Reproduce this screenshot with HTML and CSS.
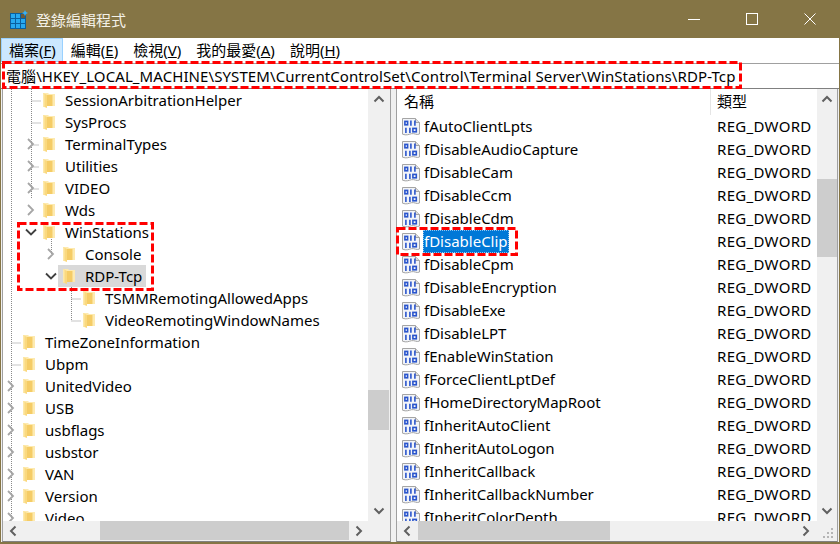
FILE: index.html
```html
<!DOCTYPE html>
<html lang="zh-Hant">
<head>
<meta charset="utf-8">
<title>登錄編輯程式</title>
<link rel="stylesheet" href="styles.css">
</head>
<body>
<svg class="defs" width="0" height="0" aria-hidden="true">
  <defs>
    <symbol id="folder" viewBox="0 0 13 17">
      <path d="M0 1h5l1 1h6v12H0z" fill="#fdeab0"/>
      <path d="M4 3h5v11H4z" fill="#f5cc66"/>
      <path d="M9 3h1v11H9z" fill="#f9dc8c"/>
      <path d="M0 1l4 2v13L0 14.500z" fill="#fad97f"/>
      <path d="M0 1l1.500 .8V15L0 14.500z" fill="#fde9ab"/>
    </symbol>
    <symbol id="bin" viewBox="0 0 18 18">
      <path d="M.5.5h13l4 4v11.500c-3 1.500-5-1-8-.3s-5 2-9 .5z" fill="#f2f4f8" stroke="#a5a5a5"/>
      <path d="M13.500.5v4h4" fill="#dcdcdc" stroke="#a5a5a5"/>
      <g fill="none" stroke="#2a55cc" stroke-width="1.600">
        <rect x="2.900" y="3.400" width="2.700" height="3.400"/>
        <path d="M8.900 2.500v5.200M12.900 2.500v5.200"/>
        <path d="M3.900 9.800v5.200M7.900 9.800v5.200"/>
        <rect x="10.900" y="10.400" width="3.400" height="3.400"/>
      </g>
    </symbol>
    <symbol id="right" viewBox="0 0 12 12"><path d="M3 1l5 5-5 5" fill="none" stroke="#a6a6a6" stroke-width="1.800"/></symbol>
    <symbol id="down" viewBox="0 0 12 12"><path d="M1 3.500l5 5 5-5" fill="none" stroke="#404040" stroke-width="1.800"/></symbol>
    <symbol id="s-up" viewBox="0 0 12 12"><path d="M1.500 8.500L6 4l4.500 4.500" fill="none" stroke="#606060" stroke-width="2"/></symbol>
    <symbol id="s-down" viewBox="0 0 12 12"><path d="M1.500 3.500L6 8l4.500-4.500" fill="none" stroke="#606060" stroke-width="2"/></symbol>
    <symbol id="s-left" viewBox="0 0 12 12"><path d="M8.500 1.500L4 6l4.500 4.500" fill="none" stroke="#606060" stroke-width="2"/></symbol>
    <symbol id="s-right" viewBox="0 0 12 12"><path d="M3.500 1.500L8 6l-4.500 4.500" fill="none" stroke="#606060" stroke-width="2"/></symbol>
  </defs>
</svg>
<div class="window">
  <header class="titlebar">
    <svg class="app-icon" width="19" height="19" viewBox="0 0 19 19">
      <rect x="0" y="3" width="16" height="16" fill="#0a5f9e"/>
      <g fill="#27a9f0">
        <rect x="1" y="4" width="4" height="4"/><rect x="6" y="4" width="4" height="4"/>
        <rect x="1" y="9" width="4" height="4"/><rect x="6" y="9" width="4" height="4"/><rect x="11" y="9" width="4" height="4"/>
        <rect x="1" y="14" width="4" height="4"/><rect x="6" y="14" width="4" height="4"/><rect x="11" y="14" width="4" height="4"/>
      </g>
      <rect x="11" y="4" width="4" height="4" fill="#6b5a3c"/>
      <path d="M15 0l1 2 2 1-2 1-1 2-1-2-2-1 2-1z" fill="#38b0f5"/>
    </svg>
    <span class="title">登錄編輯程式</span>
    <div class="controls">
      <span class="ctl"><svg width="12" height="12" viewBox="0 0 12 12"><path d="M0 6.500h12" stroke="#fff"/></svg></span>
      <span class="ctl"><svg width="12" height="12" viewBox="0 0 12 12"><rect x=".5" y=".5" width="11" height="11" fill="none" stroke="#fff"/></svg></span>
      <span class="ctl"><svg width="12" height="12" viewBox="0 0 12 12"><path d="M.5.500l11 11M11.500.500l-11 11" stroke="#fff"/></svg></span>
    </div>
  </header>
  <nav class="menubar">
    <span class="menu active">檔案(<u>F</u>)</span>
    <span class="menu">編輯(<u>E</u>)</span>
    <span class="menu">檢視(<u>V</u>)</span>
    <span class="menu">我的最愛(<u>A</u>)</span>
    <span class="menu">說明(<u>H</u>)</span>
  </nav>
  <div class="address">電腦\HKEY_LOCAL_MACHINE\SYSTEM\CurrentControlSet\Control\Terminal Server\WinStations\RDP-Tcp</div>
  <main class="panes">
    <section class="pane pane-left">
      <div class="view tree">
        <svg class="lines" width="365" height="432" viewBox="0 0 365 432">
          <g stroke="#8a8a8a" stroke-dasharray="1 1" fill="none">
            <path d="M8.500 0V432M28.500 0V110M28.500 12h9M28.500 34h9M28.500 56h8M28.500 78h8M28.500 100h8M48.500 144V166M68.500 198V232M68.500 210h9M68.500 232h9M8.500 254h9M8.500 276h9"/>
          </g>
        </svg>
        <div class="tr lv1"><span class="tw"></span><span class="node"><svg class="fd"><use href="#folder"/></svg>SessionArbitrationHelper</span></div>
        <div class="tr lv1"><span class="tw"></span><span class="node"><svg class="fd"><use href="#folder"/></svg>SysProcs</span></div>
        <div class="tr lv1"><span class="tw"><svg class="chev"><use href="#right"/></svg></span><span class="node"><svg class="fd"><use href="#folder"/></svg>TerminalTypes</span></div>
        <div class="tr lv1"><span class="tw"><svg class="chev"><use href="#right"/></svg></span><span class="node"><svg class="fd"><use href="#folder"/></svg>Utilities</span></div>
        <div class="tr lv1"><span class="tw"><svg class="chev"><use href="#right"/></svg></span><span class="node"><svg class="fd"><use href="#folder"/></svg>VIDEO</span></div>
        <div class="tr lv1"><span class="tw"><svg class="chev"><use href="#right"/></svg></span><span class="node"><svg class="fd"><use href="#folder"/></svg>Wds</span></div>
        <div class="tr lv1"><span class="tw"><svg class="chev"><use href="#down"/></svg></span><span class="node"><svg class="fd"><use href="#folder"/></svg>WinStations</span></div>
        <div class="tr lv2"><span class="tw"><svg class="chev"><use href="#right"/></svg></span><span class="node"><svg class="fd"><use href="#folder"/></svg>Console</span></div>
        <div class="tr lv2"><span class="tw"><svg class="chev"><use href="#down"/></svg></span><span class="node sel"><svg class="fd"><use href="#folder"/></svg>RDP-Tcp</span></div>
        <div class="tr lv3"><span class="tw"></span><span class="node"><svg class="fd"><use href="#folder"/></svg>TSMMRemotingAllowedApps</span></div>
        <div class="tr lv3"><span class="tw"></span><span class="node"><svg class="fd"><use href="#folder"/></svg>VideoRemotingWindowNames</span></div>
        <div class="tr"><span class="tw"></span><span class="node"><svg class="fd"><use href="#folder"/></svg>TimeZoneInformation</span></div>
        <div class="tr"><span class="tw"></span><span class="node"><svg class="fd"><use href="#folder"/></svg>Ubpm</span></div>
        <div class="tr"><span class="tw"><svg class="chev"><use href="#right"/></svg></span><span class="node"><svg class="fd"><use href="#folder"/></svg>UnitedVideo</span></div>
        <div class="tr"><span class="tw"><svg class="chev"><use href="#right"/></svg></span><span class="node"><svg class="fd"><use href="#folder"/></svg>USB</span></div>
        <div class="tr"><span class="tw"><svg class="chev"><use href="#right"/></svg></span><span class="node"><svg class="fd"><use href="#folder"/></svg>usbflags</span></div>
        <div class="tr"><span class="tw"><svg class="chev"><use href="#right"/></svg></span><span class="node"><svg class="fd"><use href="#folder"/></svg>usbstor</span></div>
        <div class="tr"><span class="tw"><svg class="chev"><use href="#right"/></svg></span><span class="node"><svg class="fd"><use href="#folder"/></svg>VAN</span></div>
        <div class="tr"><span class="tw"><svg class="chev"><use href="#right"/></svg></span><span class="node"><svg class="fd"><use href="#folder"/></svg>Version</span></div>
        <div class="tr"><span class="tw"><svg class="chev"><use href="#right"/></svg></span><span class="node"><svg class="fd"><use href="#folder"/></svg>Video</span></div>
      </div>
      <div class="vbar">
        <span class="sb-btn"><svg class="arr"><use href="#s-up"/></svg></span>
        <span class="thumb-v thumb-v-left"></span>
        <span class="sb-btn sb-end"><svg class="arr"><use href="#s-down"/></svg></span>
      </div>
      <div class="hbar">
        <span class="sb-btn h"><svg class="arr"><use href="#s-left"/></svg></span>
        <span class="thumb-h thumb-h-left"></span>
        <span class="sb-btn h"><svg class="arr"><use href="#s-right"/></svg></span>
      </div>
    </section>
    <section class="pane pane-right">
      <div class="view list">
        <div class="lhead"><span class="col-name">名稱</span><span class="col-type">類型</span></div>
        <div class="lr"><svg class="bi"><use href="#bin"/></svg><span class="nm">fAutoClientLpts</span><span class="ty">REG_DWORD</span></div>
        <div class="lr"><svg class="bi"><use href="#bin"/></svg><span class="nm">fDisableAudioCapture</span><span class="ty">REG_DWORD</span></div>
        <div class="lr"><svg class="bi"><use href="#bin"/></svg><span class="nm">fDisableCam</span><span class="ty">REG_DWORD</span></div>
        <div class="lr"><svg class="bi"><use href="#bin"/></svg><span class="nm">fDisableCcm</span><span class="ty">REG_DWORD</span></div>
        <div class="lr"><svg class="bi"><use href="#bin"/></svg><span class="nm">fDisableCdm</span><span class="ty">REG_DWORD</span></div>
        <div class="lr"><svg class="bi"><use href="#bin"/></svg><span class="nm"><span class="picked">fDisableClip</span></span><span class="ty">REG_DWORD</span></div>
        <div class="lr"><svg class="bi"><use href="#bin"/></svg><span class="nm">fDisableCpm</span><span class="ty">REG_DWORD</span></div>
        <div class="lr"><svg class="bi"><use href="#bin"/></svg><span class="nm">fDisableEncryption</span><span class="ty">REG_DWORD</span></div>
        <div class="lr"><svg class="bi"><use href="#bin"/></svg><span class="nm">fDisableExe</span><span class="ty">REG_DWORD</span></div>
        <div class="lr"><svg class="bi"><use href="#bin"/></svg><span class="nm">fDisableLPT</span><span class="ty">REG_DWORD</span></div>
        <div class="lr"><svg class="bi"><use href="#bin"/></svg><span class="nm">fEnableWinStation</span><span class="ty">REG_DWORD</span></div>
        <div class="lr"><svg class="bi"><use href="#bin"/></svg><span class="nm">fForceClientLptDef</span><span class="ty">REG_DWORD</span></div>
        <div class="lr"><svg class="bi"><use href="#bin"/></svg><span class="nm">fHomeDirectoryMapRoot</span><span class="ty">REG_DWORD</span></div>
        <div class="lr"><svg class="bi"><use href="#bin"/></svg><span class="nm">fInheritAutoClient</span><span class="ty">REG_DWORD</span></div>
        <div class="lr"><svg class="bi"><use href="#bin"/></svg><span class="nm">fInheritAutoLogon</span><span class="ty">REG_DWORD</span></div>
        <div class="lr"><svg class="bi"><use href="#bin"/></svg><span class="nm">fInheritCallback</span><span class="ty">REG_DWORD</span></div>
        <div class="lr"><svg class="bi"><use href="#bin"/></svg><span class="nm">fInheritCallbackNumber</span><span class="ty">REG_DWORD</span></div>
        <div class="lr"><svg class="bi"><use href="#bin"/></svg><span class="nm">fInheritColorDepth</span><span class="ty">REG_DWORD</span></div>
      </div>
      <div class="vbar">
        <span class="sb-btn"><svg class="arr"><use href="#s-up"/></svg></span>
        <span class="thumb-v thumb-v-right"></span>
        <span class="sb-btn sb-end"><svg class="arr"><use href="#s-down"/></svg></span>
      </div>
      <div class="hbar">
        <span class="sb-btn h"><svg class="arr"><use href="#s-left"/></svg></span>
        <span class="thumb-h thumb-h-right"></span>
        <span class="sb-btn h sb-right-right"><svg class="arr"><use href="#s-right"/></svg></span>
        <svg class="grip" width="12" height="12" viewBox="0 0 12 12"><g fill="#b5b5b5"><rect x="8" y="0" width="2" height="2"/><rect x="4" y="4" width="2" height="2"/><rect x="8" y="4" width="2" height="2"/><rect x="0" y="8" width="2" height="2"/><rect x="4" y="8" width="2" height="2"/><rect x="8" y="8" width="2" height="2"/></g></svg>
      </div>
    </section>
  </main>
  <svg class="mark mark-address" width="740" height="28"><rect class="dash" x="1.500" y="1.500" width="737" height="25"/></svg>
  <svg class="mark mark-tree" width="137" height="69"><rect class="dash" x="1.500" y="1.500" width="134" height="66"/></svg>
  <svg class="mark mark-value" width="122" height="29"><rect class="dash" x="1.500" y="1.500" width="119" height="26"/></svg>
</div>
</body>
</html>
```

FILE: styles.css
```css
* { box-sizing: border-box; }
html, body { margin: 0; height: 100%; }
body { background: #857545; overflow: hidden; }
.defs { position: absolute; }
.window {
  position: relative;
  width: 840px;
  height: 544px;
  display: flex;
  flex-direction: column;
  font-family: "Noto Sans", "Noto Sans CJK TC", sans-serif;
  font-size: 15px;
  color: #000;
  background: #857545;
  padding: 0 1px 2px;
}
.titlebar {
  height: 38px;
  flex: none;
  display: flex;
  align-items: center;
  padding-left: 9px;
  color: #fff;
}
.app-icon { flex: none; margin-right: 7px; }
.title { font-size: 15px; color: #f4f1e8; }
.controls { margin-left: auto; display: flex; height: 38px; }
.ctl { width: 58px; display: flex; align-items: center; justify-content: center; }
.menubar {
  height: 25px;
  flex: none;
  background: #fff;
  display: flex;
  align-items: stretch;
  padding-bottom: 1px;
}
.menu { padding: 0 6px 0 7px; line-height: 22px; border: 1px solid transparent; white-space: nowrap; }
.menu.active { background: #cce8ff; border-color: #99d1ff; }
.address {
  height: 26px;
  flex: none;
  background: #fff;
  border-top: 1px solid #a0a0a0;
  border-bottom: 1px solid #808080;
  padding-left: 5px;
  line-height: 24px;
  letter-spacing: 0.09px;
  white-space: nowrap;
  overflow: hidden;
}
.panes {
  flex: 1;
  min-height: 0;
  display: flex;
  gap: 5px;
  background: #f0f0f0;
  padding: 0 1px;
}
.pane {
  display: grid;
  grid-template-rows: 1fr 20px;
  min-height: 0;
  background: #f0f0f0;
  border-left: 1px solid #a0a0a0;
  border-right: 1px solid #a0a0a0;
  border-bottom: 1px solid #808080;
}
.pane-left { width: 389px; grid-template-columns: 365px 21px; }
.pane-right { flex: 1; grid-template-columns: 420px 20px; }
.view { background: #fff; overflow: hidden; position: relative; min-height: 0; }
.lines { position: absolute; left: 0; top: 0; }
.tr { height: 22px; display: flex; align-items: center; position: relative; white-space: nowrap; line-height: 22px; }
.lv1 { padding-left: 20px; }
.lv2 { padding-left: 40px; }
.lv3 { padding-left: 60px; }
.tw { width: 15px; flex: none; display: flex; justify-content: center; }
.chev { width: 12px; height: 12px; }
.node { display: flex; align-items: center; height: 22px; padding: 0 4px 0 5px; }
.node.sel { background: #d9d9d9; }
.fd { width: 13px; height: 17px; margin-right: 9px; flex: none; }
.lhead { height: 26px; display: flex; line-height: 25px; background: #fff; }
.col-name { width: 314px; padding-left: 7px; border-right: 1px solid #e5e5e5; }
.col-type { padding-left: 6px; }
.lr { height: 23px; display: flex; align-items: center; line-height: 23px; padding-left: 5px; white-space: nowrap; }
.bi { width: 18px; height: 18px; flex: none; margin-right: 4px; }
.nm { width: 293px; flex: none; }
.ty { letter-spacing: 0.3px; }
.picked {
  display: inline-block;
  background: #0078d7;
  color: #fff;
  outline: 1px dotted #8fc4ee;
  outline-offset: -1px;
  margin-left: -1px;
  padding: 0 1px;
}
.vbar { display: flex; flex-direction: column; align-items: center; background: #f0f0f0; min-height: 0; }
.hbar { grid-column: 1 / span 2; display: flex; align-items: flex-start; background: #f0f0f0; position: relative; }
.sb-btn { width: 19px; height: 20px; flex: none; display: flex; align-items: center; justify-content: center; }
.sb-btn.h { height: 19px; }
.sb-end { margin-top: auto; }
.arr { width: 12px; height: 12px; }
.thumb-v { display: block; width: 100%; background: #cdcdcd; flex: none; }
.thumb-v-left { margin-top: 281px; height: 40px; }
.thumb-v-right { margin-top: 70px; height: 78px; }
.thumb-h { display: block; height: 19px; background: #cdcdcd; flex: none; }
.thumb-h-left { margin-left: 78px; width: 249px; }
.thumb-h-right { margin-left: 2px; width: 192px; }
.sb-right-right { margin-left: auto; margin-right: 22px; }
.grip { position: absolute; right: 2px; bottom: 1px; }
.mark { position: absolute; pointer-events: none; }
.dash { fill: none; stroke: #f00; stroke-width: 3; stroke-dasharray: 8 3; }
.mark-address { left: 2px; top: 61px; }
.mark-tree { left: 17px; top: 222px; }
.mark-value { left: 396px; top: 227px; }
```
